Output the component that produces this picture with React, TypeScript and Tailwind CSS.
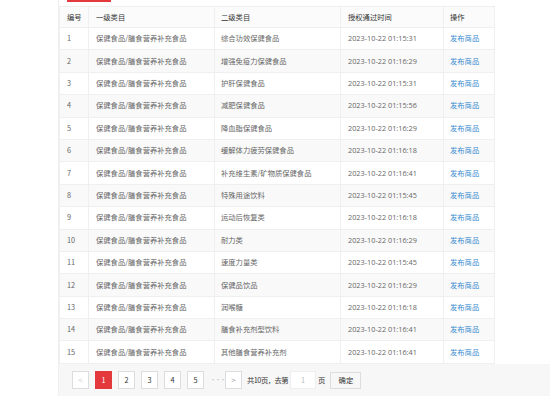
import React from "react";

const rows: [string, string, string][] = [
  ["1", "综合功效保健食品", "2023-10-22 01:15:31"],
  ["2", "增强免疫力保健食品", "2023-10-22 01:16:29"],
  ["3", "护肝保健食品", "2023-10-22 01:15:31"],
  ["4", "减肥保健食品", "2023-10-22 01:15:56"],
  ["5", "降血脂保健食品", "2023-10-22 01:16:29"],
  ["6", "缓解体力疲劳保健食品", "2023-10-22 01:16:18"],
  ["7", "补充维生素/矿物质保健食品", "2023-10-22 01:16:41"],
  ["8", "特殊用途饮料", "2023-10-22 01:15:45"],
  ["9", "运动后恢复类", "2023-10-22 01:16:18"],
  ["10", "耐力类", "2023-10-22 01:16:29"],
  ["11", "速度力量类", "2023-10-22 01:15:45"],
  ["12", "保健品饮品", "2023-10-22 01:16:29"],
  ["13", "润喉糖", "2023-10-22 01:16:18"],
  ["14", "膳食补充剂型饮料", "2023-10-22 01:16:41"],
  ["15", "其他膳食营养补充剂", "2023-10-22 01:16:41"],
];

const font = { fontFamily: '"Microsoft YaHei", "Noto Sans CJK SC", sans-serif' };

export default function App() {
  return (
    <div className="w-[550px] h-[396px] bg-white overflow-hidden text-[7.3px] text-[#666]" style={font}>
      <div className="ml-[58px] h-full border-l border-[#efefef] flex flex-col">
        <div className="h-[6px] pl-[8px]">
          <div className="w-[44px] h-[2px] bg-[#e4393c]" />
        </div>
        <div className="w-[435px]">
          <table className="w-full border-collapse table-fixed">
            <colgroup>
              <col className="w-[29px]" />
              <col className="w-[126px]" />
              <col className="w-[126px]" />
              <col className="w-[103px]" />
              <col className="w-[51px]" />
            </colgroup>
            <thead>
              <tr className="h-[21px] bg-[#fbfbfb] text-[#333]">
                <th className="border border-[#efefef] text-left font-normal pl-[7px]">编号</th>
                <th className="border border-[#efefef] text-left font-normal pl-[7px]">一级类目</th>
                <th className="border border-[#efefef] text-left font-normal pl-[6px]">二级类目</th>
                <th className="border border-[#efefef] text-left font-normal pl-[7px]">授权通过时间</th>
                <th className="border border-[#efefef] text-left font-normal pl-[6px]">操作</th>
              </tr>
            </thead>
            <tbody>
              {rows.map((r, i) => (
                <tr key={r[0]} className={`h-[22.4px] ${i % 2 === 1 ? "bg-[#f9f9f9]" : "bg-white"}`}>
                  <td className="border border-[#efefef] pl-[7px]">{r[0]}</td>
                  <td className="border border-[#efefef] pl-[7px]">保健食品/膳食营养补充食品</td>
                  <td className="border border-[#efefef] pl-[6px]">{r[1]}</td>
                  <td className="border border-[#efefef] pl-[7px]" style={{ fontFamily: '"Open Sans", "Noto Sans", sans-serif' }}>{r[2]}</td>
                  <td className="border border-[#efefef] pl-[6px] text-[#3a8ccf]">发布商品</td>
                </tr>
              ))}
            </tbody>
          </table>
        </div>
        <div className="flex-1 bg-[#f7f7f7] flex items-center pl-[13px] pt-[1px]">
          <div className="flex items-center gap-[6px]">
            <div className="w-[17px] h-[18px] border border-[#ddd] bg-white flex items-center justify-center text-[#ccc] text-[8px]">&lt;</div>
            <div className="w-[17px] h-[18px] bg-[#e4393c] text-white flex items-center justify-center">1</div>
            {["2", "3", "4", "5"].map((n) => (
              <div key={n} className="w-[17px] h-[18px] border border-[#ddd] bg-white flex items-center justify-center text-[#333]">{n}</div>
            ))}
            <div className="w-[9px] text-center text-[#bbb] text-[6px] tracking-[-1px] leading-none">···</div>
            <div className="w-[17px] h-[18px] border border-[#ddd] bg-white flex items-center justify-center text-[#999] text-[8px]">&gt;</div>
            <div className="flex items-center text-[#333] -ml-[1px]">
              <span className="tracking-[-0.5px]">共10页，去第</span>
              <div className="ml-[2px] w-[26px] h-[18px] border border-[#eee] bg-white flex items-center justify-center text-[#bbb]">1</div>
              <span className="ml-[2px]">页</span>
              <div className="ml-[5px] w-[31px] h-[17px] border border-[#ddd] bg-[#f7f7f7] flex items-center justify-center">确定</div>
            </div>
          </div>
        </div>
      </div>
    </div>
  );
}
